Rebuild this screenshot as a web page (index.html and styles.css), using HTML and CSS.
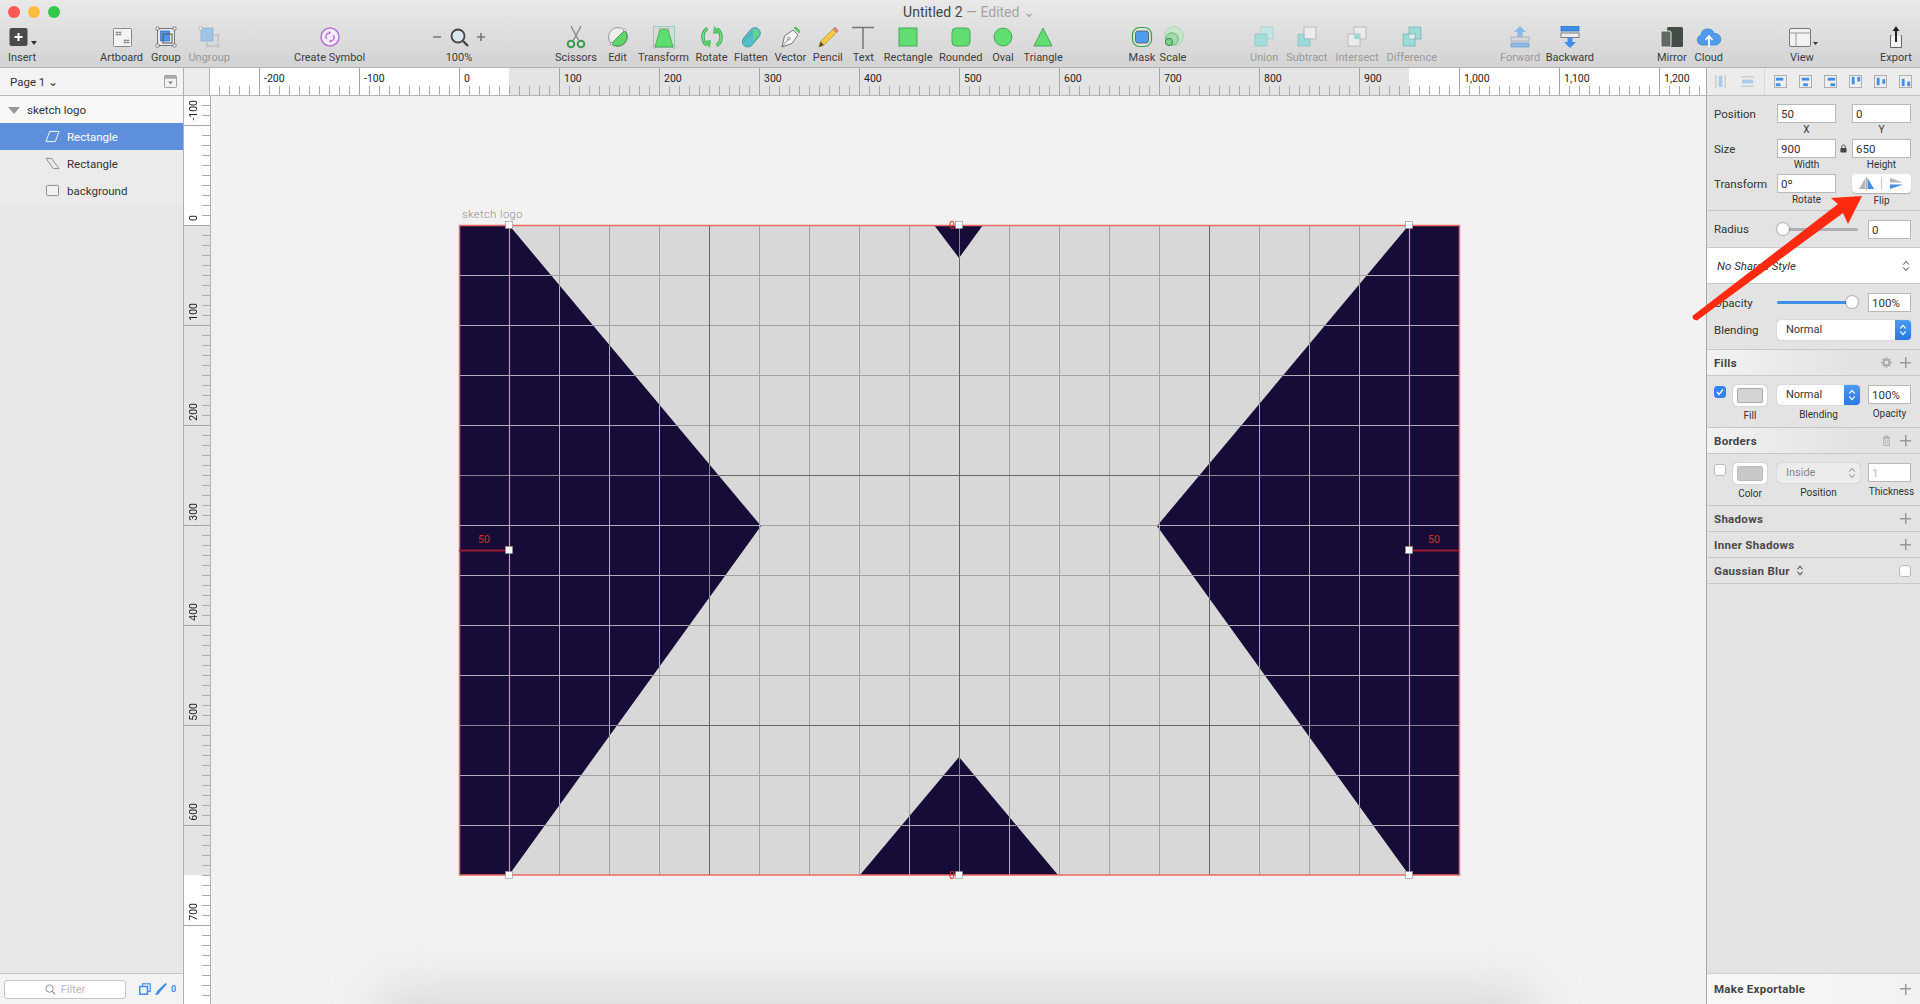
FILE: index.html
```html
<!DOCTYPE html>
<html lang="en">
<head>
    <meta charset="UTF-8">
    <title>Untitled 2 - Edited</title>
    <link rel="stylesheet" href="styles.css">
</head>
<body>
<div class="app">
    <header class="toolbar">
        <div class="titlebar">
            <div class="lights"><i class="light red"></i><i class="light yellow"></i><i class="light green"></i></div>
            <div class="doc-title">Untitled 2 <em>— Edited ⌄</em></div>
        </div>
        <div class="tools">
            <div class="group g-insert">
                <div class="tool"><svg viewBox="0 0 28 28"><rect x="1.500" y="5" width="18" height="18" rx="2" fill="#4a4a4a"/><path d="M10.500 10v8M6.500 14h8" stroke="#fff" stroke-width="2"/><path d="M23 18h6l-3 4z" fill="#333"/></svg><span>Insert</span></div>
            </div>
            <div class="group g-art">
                <div class="tool"><svg viewBox="0 0 28 28"><rect x="5.500" y="5.500" width="18" height="18" rx="1" fill="#f4f4f4" stroke="#888"/><path d="M9 8v5M12 8v5M7.500 9.500h6M7.500 11.500h6M17 16v5M20 16v5M15.500 17.500h6M15.500 19.500h6" stroke="#777" stroke-width=".7" fill="none"/></svg><span>Artboard</span></div>
                <div class="tool"><svg viewBox="0 0 28 28"><rect x="5.500" y="5.500" width="17" height="17" fill="#e8e8e8" stroke="#777"/><rect x="8.500" y="8" width="9" height="10" fill="#4f96ea" stroke="#2f6fc0" stroke-width=".7"/><rect x="11" y="11" width="9" height="9" fill="none" stroke="#555"/><path d="M4 4h3v3H4zM21 4h3v3h-3zM4 21h3v3H4zM21 21h3v3h-3z" fill="#fff" stroke="#666" stroke-width=".7"/></svg><span>Group</span></div>
                <div class="tool off"><svg viewBox="0 0 28 28"><rect x="6" y="5" width="12" height="13" fill="#9cc6ea" stroke="#86aac8" stroke-width=".7"/><rect x="12" y="12" width="11" height="11" fill="none" stroke="#b8b8b8"/><path d="M4 4h3v3H4zM22 11h2v2h-2zM11 22h2v2h-2zM22 22h2v2h-2z" fill="#fff" stroke="#aaa" stroke-width=".7"/></svg><span>Ungroup</span></div>
            </div>
            <div class="group g-symbol">
                <div class="tool"><svg viewBox="0 0 28 28"><circle cx="14" cy="14" r="9" fill="#f4edf8" stroke="#b774d8" stroke-width="1.500"/><path d="M10.500 16a4 4 0 0 1 3-6.200M17.500 12a4 4 0 0 1-3 6.200" fill="none" stroke="#b95fe0" stroke-width="1.300"/><path d="M13 8l2 1.800-2 1.700zM15 20l-2-1.800 2-1.700z" fill="#b95fe0"/></svg><span>Create Symbol</span></div>
            </div>
            <div class="group g-zoom">
                <div class="tool zoomer"><svg class="wide" viewBox="0 0 56 28"><path d="M2 14h8M46 14h8M50 10v8" stroke="#777" stroke-width="1.600" fill="none"/><circle cx="27" cy="13" r="6.500" fill="#d8e6ee" stroke="#444" stroke-width="1.800"/><path d="M32 18l5 5" stroke="#444" stroke-width="2.400"/></svg><span>100%</span></div>
            </div>
            <div class="group g-draw">
                <div class="tool"><svg viewBox="0 0 28 28"><path d="M9 3l8 15M19 3l-8 15" stroke="#8a8a8a" stroke-width="1.400" fill="none"/><circle cx="9" cy="21" r="3.300" fill="none" stroke="#3f9a52" stroke-width="2"/><circle cx="19" cy="21" r="3.300" fill="none" stroke="#3f9a52" stroke-width="2"/></svg><span>Scissors</span></div>
                <div class="tool"><svg viewBox="0 0 28 28"><circle cx="14" cy="14" r="9.500" fill="#eee" stroke="#999"/><path d="M7.300 20.700A9.500 9.500 0 0 0 20.700 7.300z" fill="#5fd868" stroke="#3f9a52"/><circle cx="7.300" cy="20.700" r="1.300" fill="#fff" stroke="#666" stroke-width=".5"/><circle cx="20.700" cy="7.300" r="1.300" fill="#fff" stroke="#666" stroke-width=".5"/></svg><span>Edit</span></div>
                <div class="tool"><svg viewBox="0 0 28 28"><rect x="3.500" y="3.500" width="21" height="21" fill="#c8e0d0" fill-opacity=".5" stroke="#9cb"/><path d="M10 6h8l5 18H5z" fill="#5fdc70" stroke="#3f9a52" stroke-width=".7"/><path d="M9 5h2v2H9zM17 5h2v2h-2zM3 23h2v2H3zM23 23h2v2h-2z" fill="#fff" stroke="#777" stroke-width=".5"/></svg><span>Transform</span></div>
                <div class="tool"><svg viewBox="0 0 28 28"><path d="M9.500 5.500C3 9 4 19 9 22" fill="none" stroke="#3f9a52" stroke-width="3.400"/><path d="M9.500 5.500C3 9 4 19 9 22" fill="none" stroke="#6fe07c" stroke-width="1.800"/><path d="M5 18l7 7 1-8z" fill="#55c566"/><path d="M18.500 22.500C25 19 24 9 19 6" fill="none" stroke="#3f9a52" stroke-width="3.400"/><path d="M18.500 22.500C25 19 24 9 19 6" fill="none" stroke="#6fe07c" stroke-width="1.800"/><path d="M23 10l-7-7-1 8z" fill="#55c566"/></svg><span>Rotate</span></div>
                <div class="tool"><svg viewBox="0 0 28 28"><rect x="9" y="3" width="11" height="22" rx="5.500" transform="rotate(40 14 14)" fill="#54bdca" stroke="#3a8f9a" stroke-width=".7"/><path d="M16 7c3-2 7 1 5.500 5L16 18z" fill="#62d884"/><path d="M7 18l9-10" stroke="#3a8f9a" stroke-width=".6"/></svg><span>Flatten</span></div>
                <div class="tool"><svg viewBox="0 0 28 28"><path d="M6 24l2.500-11L17 7l5 5-6 8.500z" fill="#f4f4f4" stroke="#777"/><path d="M6 24l6-7.500" stroke="#777" stroke-width=".8"/><circle cx="12.800" cy="15.600" r="1.400" fill="none" stroke="#777" stroke-width=".8"/><path d="M18 5l2-1 4 4-1 2z" fill="#5fd868" stroke="#3f9a52" stroke-width=".6"/></svg><span>Vector</span></div>
                <div class="tool"><svg viewBox="0 0 28 28"><path d="M5 24l1.500-5.500L19 6l3.500 3.500L10 22z" fill="#f4c84a" stroke="#b78f2a" stroke-width=".7"/><path d="M5 24l1.500-5.500L10 22z" fill="#5a5040"/><path d="M19 6l2-2 3.500 3.500-2 2z" fill="#e88a90" stroke="#a06060" stroke-width=".5"/></svg><span>Pencil</span></div>
                <div class="tool"><svg viewBox="0 0 28 28"><path d="M3 4.500h22M14 4.500V26" stroke="#777" stroke-width="1.500" fill="none"/></svg><span>Text</span></div>
                <div class="tool"><svg viewBox="0 0 28 28"><rect x="5" y="5" width="18" height="18" class="shape"/></svg><span>Rectangle</span></div>
                <div class="tool"><svg viewBox="0 0 28 28"><rect x="5" y="5" width="18" height="18" rx="4" class="shape"/></svg><span>Rounded</span></div>
                <div class="tool"><svg viewBox="0 0 28 28"><circle cx="14" cy="14" r="9" class="shape"/></svg><span>Oval</span></div>
                <div class="tool"><svg viewBox="0 0 28 28"><path d="M14 5l9 18H5z" class="shape"/></svg><span>Triangle</span></div>
            </div>
            <div class="group g-mask">
                <div class="tool"><svg viewBox="0 0 28 28"><rect x="4.500" y="4.500" width="19" height="19" rx="7" fill="#d8e8d8" stroke="#3f9a52" stroke-width="1.200"/><rect x="7.500" y="8" width="13" height="12" rx="2.500" fill="#4f9cec" stroke="#555" stroke-width=".8"/></svg><span>Mask</span></div>
                <div class="tool"><svg viewBox="0 0 28 28"><circle cx="15" cy="13" r="9.500" fill="#c6e6ca" stroke="#9fd0a6" stroke-width=".7"/><circle cx="13" cy="16" r="6.200" fill="#a2dcaa" stroke="#4ea860" stroke-width=".8"/><circle cx="10" cy="19" r="3.600" fill="#7cd28a" stroke="#36864a"/></svg><span>Scale</span></div>
            </div>
            <div class="group g-bool off">
                <div class="tool"><svg viewBox="0 0 28 28"><rect x="11" y="4" width="12" height="12" fill="#c4e6e4" stroke="#a8c8c8" stroke-width=".7"/><rect x="5" y="11" width="12" height="12" fill="#a4dedb" stroke="#8cc0be" stroke-width=".7"/></svg><span>Union</span></div>
                <div class="tool"><svg viewBox="0 0 28 28"><rect x="11" y="4" width="12" height="12" fill="#ececec" stroke="#aaa" stroke-width=".7"/><path d="M5 11h6v5h6v7H5z" fill="#9cdcd8" stroke="#80bcb8" stroke-width=".7"/></svg><span>Subtract</span></div>
                <div class="tool"><svg viewBox="0 0 28 28"><rect x="11" y="4" width="12" height="12" fill="#ececec" stroke="#aaa" stroke-width=".7"/><rect x="5" y="11" width="12" height="12" fill="#ececec" stroke="#aaa" stroke-width=".7"/><rect x="11" y="11" width="6" height="5" fill="#9cdcd8"/></svg><span>Intersect</span></div>
                <div class="tool"><svg viewBox="0 0 28 28"><rect x="11" y="4" width="12" height="12" fill="#9cdcd8" stroke="#70b0ac" stroke-width=".7"/><rect x="5" y="11" width="12" height="12" fill="#9cdcd8" stroke="#70b0ac" stroke-width=".7"/><rect x="11" y="11" width="6" height="5" fill="#e8e8e8" stroke="#70b0ac" stroke-width=".5"/></svg><span>Difference</span></div>
            </div>
            <div class="group g-order">
                <div class="tool off"><svg viewBox="0 0 28 28"><path d="M14 3l6 6h-3.500v5h-5V9H8z" fill="#8ab8ea"/><rect x="5" y="14" width="18" height="4" fill="#d8d8d8" stroke="#9ab" stroke-width=".8"/><rect x="5" y="20" width="18" height="4" fill="#8ab8ea" stroke="#7aa0c8" stroke-width=".8"/></svg><span>Forward</span></div>
                <div class="tool"><svg viewBox="0 0 28 28"><rect x="5" y="3.500" width="18" height="4.500" fill="#3f8ee8" stroke="#2a6fb8" stroke-width=".8"/><rect x="5" y="10" width="18" height="4.500" fill="#eee" stroke="#666" stroke-width=".8"/><path d="M11.500 14.500h5V19H20l-6 6-6-6h3.500z" fill="#3f8ee8"/></svg><span>Backward</span></div>
            </div>
            <div class="group g-send">
                <div class="tool"><svg viewBox="0 0 28 28"><rect x="9" y="4" width="16" height="20" rx="1.500" fill="#444c46"/><rect x="3" y="8" width="10" height="16" rx="1.500" fill="#5f6862" stroke="#e4e4e4"/></svg><span>Mirror</span></div>
                <div class="tool"><svg viewBox="0 0 28 28"><path d="M7 21a5 5 0 0 1-1-9.800A6 6 0 0 1 13 5a6 6 0 0 1 6 4.500 5.800 5.800 0 0 1 2 11.500z" fill="#4f9cec" stroke="#2f7cd0" stroke-width=".7" transform="translate(0 1)"/><path d="M14 24v-10M10.500 17l3.500-4 3.500 4" fill="none" stroke="#fff" stroke-width="1.800"/></svg><span>Cloud</span></div>
            </div>
            <div class="group g-view">
                <div class="tool"><svg viewBox="0 0 28 28"><rect x="1.500" y="5.500" width="21" height="18" rx="1.500" fill="#f2f2f2" stroke="#777"/><path d="M1.500 10h21M8 10v13.500" stroke="#999" fill="none"/><path d="M25 19h5l-2.500 3z" fill="#333"/></svg><span>View</span></div>
            </div>
            <div class="group g-export">
                <div class="tool"><svg viewBox="0 0 28 28"><path d="M9.500 12.500h-1v12h11v-12h-1" fill="#f2f2f2" stroke="#666"/><path d="M14 19V6" stroke="#222" stroke-width="2"/><path d="M10.500 8L14 3l3.500 5z" fill="#222"/></svg><span>Export</span></div>
            </div>
        </div>
    </header>

    <div class="work">
        <aside class="sidebar">
            <div class="page-row">
                <span>Page 1 ⌄</span>
                <svg class="page-ico" viewBox="0 0 14 14"><rect x=".5" y=".5" width="13" height="13" rx="1" fill="#f2f2f2" stroke="#999"/><path d="M1 1h12v3H1z" fill="#aaa"/><path d="M4.500 7h5L7 10z" fill="#777"/></svg>
            </div>
            <div class="layer layer-group">
                <svg class="caret" viewBox="0 0 12 8"><path d="M0 1h12L6 8z" fill="#999"/></svg>
                <span>sketch logo</span>
            </div>
            <div class="layer layer-child selected">
                <svg viewBox="0 0 16 14"><path d="M5 1.500h10l-4 11H1z" fill="none" stroke="#fff"/></svg>
                <span>Rectangle</span>
            </div>
            <div class="layer layer-child">
                <svg viewBox="0 0 16 14"><path d="M1 1.500h6l8 11H9z" fill="none" stroke="#888"/></svg>
                <span>Rectangle</span>
            </div>
            <div class="layer layer-child">
                <svg viewBox="0 0 16 14"><rect x="1.500" y="1.500" width="13" height="11" rx="1" fill="#f0f0f0" stroke="#888"/></svg>
                <span>background</span>
            </div>
            <div class="side-fill"></div>
            <div class="filter-bar">
                <div class="filter">
                    <svg viewBox="0 0 12 12"><circle cx="5" cy="5" r="4" fill="none" stroke="#888"/><path d="M8 8l3 3" stroke="#888" stroke-width="1.200"/></svg>
                    <span>Filter</span>
                </div>
                <svg class="filter-ico" viewBox="0 0 12 12"><rect x="3.500" y=".8" width="7.700" height="7.700" fill="none" stroke="#3f8ee8" stroke-width="1.200"/><rect x=".8" y="3.500" width="7.700" height="7.700" fill="#f3f3f3" stroke="#3f8ee8" stroke-width="1.500"/></svg>
                <svg class="filter-ico" viewBox="0 0 12 12"><path d="M0 12c3 0 4-1 5-3L12 1 10.500 0 3 7c-1.500 1.500-1.500 3-3 5z" fill="#3f8ee8"/></svg>
                <b class="filter-count">0</b>
            </div>
        </aside>

        <main class="stage">
            <div class="ruler-row">
                <div class="ruler-corner"></div>
                <div class="h-ruler">
                    <div class="h-first"></div>
                    <div class="h-cell">-200</div>
                    <div class="h-cell">-100</div>
                    <div class="h-cell">0</div>
                    <div class="h-cell">100</div>
                    <div class="h-cell">200</div>
                    <div class="h-cell">300</div>
                    <div class="h-cell">400</div>
                    <div class="h-cell">500</div>
                    <div class="h-cell">600</div>
                    <div class="h-cell">700</div>
                    <div class="h-cell">800</div>
                    <div class="h-cell">900</div>
                    <div class="h-cell">1,000</div>
                    <div class="h-cell">1,100</div>
                    <div class="h-cell">1,200</div>
                </div>
            </div>
            <div class="canvas-row">
                <div class="v-ruler">
                    <div class="v-cell v-first"><span>-100</span></div>
                    <div class="v-cell"><span>0</span></div>
                    <div class="v-cell"><span>100</span></div>
                    <div class="v-cell"><span>200</span></div>
                    <div class="v-cell"><span>300</span></div>
                    <div class="v-cell"><span>400</span></div>
                    <div class="v-cell"><span>500</span></div>
                    <div class="v-cell"><span>600</span></div>
                    <div class="v-cell"><span>700</span></div>
                </div>
                <div class="canvas">
                    <div class="board-name">sketch logo</div>
                    <svg class="board" width="1002" height="652" viewBox="0 0 1002 652">
                        <defs>
                            <pattern id="gridOnGrey" width="50" height="50" patternUnits="userSpaceOnUse"><path d="M0 .5H50M.5 0V50" stroke="#a2a2a2" fill="none"/></pattern>
                            <pattern id="gridOnDark" width="50" height="50" patternUnits="userSpaceOnUse"><path d="M0 .5H50M.5 0V50" stroke="#b4acbb" fill="none"/></pattern>
                            <pattern id="boldOnGrey" width="250" height="250" patternUnits="userSpaceOnUse"><path d="M0 .5H250M.5 0V250" stroke="#666" fill="none"/></pattern>
                            <pattern id="boldOnDark" width="250" height="250" patternUnits="userSpaceOnUse"><path d="M0 .5H250M.5 0V250" stroke="#8b8494" fill="none"/></pattern>
                            <path id="logoShapes" d="M0 0H50L302 301 50 650H0ZM1000 0H950L698 301 950 650H1000ZM475 0H524L500 33ZM500 532L401 650H599Z"/>
                        </defs>
                        <rect width="1000" height="650" fill="#d8d8d8"/>
                        <rect width="1000" height="650" fill="url(#gridOnGrey)"/>
                        <rect width="1000" height="650" fill="url(#boldOnGrey)"/>
                        <use href="#logoShapes" fill="#170b38"/>
                        <use href="#logoShapes" fill="url(#gridOnDark)"/>
                        <use href="#logoShapes" fill="url(#boldOnDark)"/>
                        <rect x=".5" y=".5" width="1000" height="649.500" fill="none" stroke="#ee6a62" stroke-width="1.500"/>
                        <path d="M50.500 0V650M950.500 0V650" stroke="#e58f8a" stroke-width="1.200" fill="none"/>
                        <path d="M0 325.500H50M950 325.500H1000" stroke="#9a1c30" stroke-width="2" fill="none"/>
                        <text x="25" y="318" class="measure" text-anchor="middle">50</text>
                        <text x="975" y="318" class="measure" text-anchor="middle">50</text>
                        <text x="493" y="4" class="measure" text-anchor="middle">0</text>
                        <text x="493" y="654" class="measure" text-anchor="middle">0</text>
                        <g class="handles">
                            <rect x="46.500" y="-3.500" width="7" height="7"/><rect x="496.500" y="-3.500" width="7" height="7"/><rect x="946.500" y="-3.500" width="7" height="7"/>
                            <rect x="46.500" y="321.500" width="7" height="7"/><rect x="946.500" y="321.500" width="7" height="7"/>
                            <rect x="46.500" y="646.500" width="7" height="7"/><rect x="496.500" y="646.500" width="7" height="7"/><rect x="946.500" y="646.500" width="7" height="7"/>
                        </g>
                    </svg>
                    <div class="canvas-shade"></div>
                </div>
            </div>
        </main>

        <aside class="inspector">
            <div class="align-bar">
                <div class="align-a">
                    <svg viewBox="0 0 14 14"><path d="M1 0v14M11 0v14" stroke="#bbb" fill="none"/><rect x="4" y="1" width="4" height="12" fill="#a8ccee"/></svg>
                    <svg viewBox="0 0 14 14"><path d="M0 2h14M0 12h14" stroke="#bbb" fill="none"/><rect x="1" y="5" width="12" height="4" fill="#a8ccee"/></svg>
                </div>
                <div class="align-b">
                    <svg viewBox="0 0 14 14"><rect x=".5" y=".5" width="13" height="13" fill="#eee" stroke="#aaa"/><rect x="2" y="3" width="8" height="3" fill="#3f8ee8"/><rect x="2" y="9" width="5" height="3" fill="#3f8ee8"/></svg>
                    <svg viewBox="0 0 14 14"><rect x=".5" y=".5" width="13" height="13" fill="#eee" stroke="#aaa"/><rect x="3" y="3" width="8" height="3" fill="#3f8ee8"/><rect x="4.500" y="9" width="5" height="3" fill="#3f8ee8"/></svg>
                    <svg viewBox="0 0 14 14"><rect x=".5" y=".5" width="13" height="13" fill="#eee" stroke="#aaa"/><rect x="4" y="3" width="8" height="3" fill="#3f8ee8"/><rect x="7" y="9" width="5" height="3" fill="#3f8ee8"/></svg>
                    <svg viewBox="0 0 14 14"><rect x=".5" y=".5" width="13" height="13" fill="#eee" stroke="#aaa"/><rect x="3" y="2" width="3" height="8" fill="#3f8ee8"/><rect x="9" y="2" width="3" height="5" fill="#3f8ee8"/></svg>
                    <svg viewBox="0 0 14 14"><rect x=".5" y=".5" width="13" height="13" fill="#eee" stroke="#aaa"/><rect x="3" y="3" width="3" height="8" fill="#3f8ee8"/><rect x="9" y="4.500" width="3" height="5" fill="#3f8ee8"/></svg>
                    <svg viewBox="0 0 14 14"><rect x=".5" y=".5" width="13" height="13" fill="#eee" stroke="#aaa"/><rect x="3" y="4" width="3" height="8" fill="#3f8ee8"/><rect x="9" y="7" width="3" height="5" fill="#3f8ee8"/></svg>
                </div>
            </div>

            <section class="sec sec-xform">
                <div class="row">
                    <label>Position</label>
                    <div class="field"><div class="input">50</div><small>X</small></div>
                    <div class="field"><div class="input">0</div><small>Y</small></div>
                </div>
                <div class="row">
                    <label>Size</label>
                    <div class="field"><div class="input">900</div><small>Width</small></div>
                    <svg class="lock" viewBox="0 0 8 10"><path d="M2 4.500V3a2 2 0 0 1 4 0v1.500" fill="none" stroke="#444"/><rect x=".5" y="4.500" width="7" height="5" rx=".8" fill="#444"/></svg>
                    <div class="field"><div class="input">650</div><small>Height</small></div>
                </div>
                <div class="row">
                    <label>Transform</label>
                    <div class="field"><div class="input">0º</div><small>Rotate</small></div>
                    <div class="field">
                        <div class="flip">
                            <svg viewBox="0 0 16 12"><path d="M7 1v10H1z" fill="#b4b4b4"/><path d="M9 1v10h6z" fill="#3f8ee8"/><path d="M8 0v12" stroke="#777" stroke-width=".6"/></svg>
                            <svg viewBox="0 0 16 12"><path d="M2 1l12 4H2z" fill="#b4b4b4"/><path d="M2 7h12L2 11z" fill="#3f8ee8"/></svg>
                        </div>
                        <small class="flip-cap">Flip</small>
                    </div>
                </div>
            </section>

            <section class="sec sec-radius">
                <label>Radius</label>
                <div class="slider"><i class="knob knob-start"></i></div>
                <div class="input small-input">0</div>
            </section>

            <div class="style-row"><em>No Shared Style</em><svg viewBox="0 0 8 13"><path d="M1 5l3-3.500L7 5M1 8l3 3.500L7 8" fill="none" stroke="#333" stroke-width="1"/></svg></div>

            <section class="sec sec-opacity">
                <div class="op-row">
                    <label>Opacity</label>
                    <div class="slider slider-on"><i class="knob knob-end"></i></div>
                    <div class="input small-input">100%</div>
                </div>
                <div class="op-row">
                    <label>Blending</label>
                    <div class="select select-full">Normal<b class="stepper"><svg viewBox="0 0 8 13"><path d="M1 5l3-3.500L7 5M1 8l3 3.500L7 8" fill="none" stroke="#fff" stroke-width="1.200"/></svg></b></div>
                </div>
            </section>

            <div class="sec-head">Fills<span class="head-icons"><svg viewBox="0 0 12 12"><circle cx="6" cy="6" r="3.200" fill="none" stroke="#aaa" stroke-width="2.200"/><path d="M6 0v2M6 10v2M0 6h2M10 6h2M1.800 1.800l1.400 1.400M8.800 8.800l1.400 1.400M1.800 10.200l1.400-1.400M8.800 3.200l1.400-1.400" stroke="#aaa" stroke-width="1.500"/></svg><i class="plus"></i></span></div>
            <section class="sec style-line">
                <b class="check on"><svg viewBox="0 0 10 10"><path d="M2 5l2 2.500L8 2.500" fill="none" stroke="#fff" stroke-width="1.400"/></svg></b>
                <div class="colum colum-swatch"><div class="swatch"><i></i></div><small>Fill</small></div>
                <div class="colum colum-select"><div class="select">Normal<b class="stepper"><svg viewBox="0 0 8 13"><path d="M1 5l3-3.500L7 5M1 8l3 3.500L7 8" fill="none" stroke="#fff" stroke-width="1.200"/></svg></b></div><small>Blending</small></div>
                <div class="colum colum-num"><div class="input">100%</div><small>Opacity</small></div>
            </section>

            <div class="sec-head">Borders<span class="head-icons"><svg viewBox="0 0 10 12"><path d="M1 2.500h8M3.500 2.500V1h3v1.500M2 3.500h6v8H2z" fill="none" stroke="#aaa"/><path d="M4 5v5M6 5v5" stroke="#aaa" stroke-width=".7"/></svg><i class="plus"></i></span></div>
            <section class="sec style-line">
                <b class="check"></b>
                <div class="colum colum-swatch"><div class="swatch swatch-off"><i></i></div><small>Color</small></div>
                <div class="colum colum-select"><div class="select select-off">Inside<svg class="chev" viewBox="0 0 8 13"><path d="M1 5l3-3.500L7 5M1 8l3 3.500L7 8" fill="none" stroke="#777" stroke-width="1"/></svg></div><small>Position</small></div>
                <div class="colum colum-num"><div class="input input-off">1</div><small class="wide-cap">Thickness</small></div>
            </section>

            <div class="sec-flat">Shadows<i class="plus"></i></div>
            <div class="sec-flat">Inner Shadows<i class="plus"></i></div>
            <div class="sec-flat">Gaussian Blur <svg class="blur-chev" viewBox="0 0 8 13"><path d="M1 5l3-3.500L7 5M1 8l3 3.500L7 8" fill="none" stroke="#444" stroke-width="1.200"/></svg><b class="check blur-check"></b></div>
            <div class="insp-fill"></div>
            <div class="export-row">Make Exportable<i class="plus"></i></div>
        </aside>
    </div>

    <svg class="annotation" viewBox="0 0 1920 1004"><path d="M1693 315.500 1838 204 1831 198 1862 196 1848 224 1843 213 1697 320.500Q1691 319 1693 315.500Z" fill="#ff2a10"/></svg>
</div>
</body>
</html>
```

FILE: styles.css
```css
* {
    box-sizing: border-box;
}
html, body {
    margin: 0;
    height: 100%;
    overflow: hidden;
}
body {
    font-family: Roboto, "Liberation Sans", sans-serif;
    font-size: 11px;
    color: #333;
}
.app {
    position: relative;
    width: 1920px;
    height: 1004px;
    display: flex;
    flex-direction: column;
    overflow: hidden;
}

/* toolbar */
.toolbar {
    height: 68px;
    flex: none;
    background: linear-gradient(#e9e9e9, #d3d3d3);
    border-bottom: 1px solid #b2b2b2;
}
.titlebar {
    height: 23px;
    margin-bottom: -1px;
    display: flex;
    align-items: center;
}
.lights {
    width: 0;
    display: flex;
    gap: 8px;
    padding-left: 8px;
}
.light {
    flex: none;
    width: 12px;
    height: 12px;
    border-radius: 50%;
}
.light.red { background: #fc5753; }
.light.yellow { background: #fdbc40; }
.light.green { background: #34c84a; }
.doc-title {
    flex: 1;
    text-align: center;
    padding-left: 10px;
    font-size: 14px;
    color: #444;
}
.doc-title em {
    font-style: normal;
    color: #a4a4a4;
}
.tools {
    display: flex;
    height: 45px;
}
.group {
    display: flex;
    justify-content: space-between;
    flex: none;
    height: 100%;
}
.g-insert { width: 28px; margin-left: 8px; }
.g-art { width: 130px; margin-left: 64px; }
.g-symbol { width: 70px; margin-left: 64px; }
.g-zoom { width: 56px; margin-left: 67px; }
.g-draw { width: 508px; margin-left: 68px; }
.g-mask { width: 59px; margin-left: 65px; }
.g-bool { width: 187px; margin-left: 63px; }
.g-order { width: 94px; margin-left: 63px; }
.g-send { width: 66px; margin-left: 63px; }
.g-view { width: 28px; margin-left: 65px; }
.g-export { width: 32px; margin-left: 64px; }
.tool {
    display: flex;
    flex-direction: column;
    align-items: center;
    width: min-content;
    white-space: nowrap;
    color: #3c3c3c;
}
.tool svg {
    width: 28px;
    height: 28px;
    overflow: visible;
    margin-top: 1px;
}
.tool svg.wide { width: 56px; }
.tool span {
    line-height: 14px;
}
.tool.off, .off .tool {
    color: #999;
}
.zoomer { width: 56px; }
.shape {
    fill: #62dd72;
    stroke: #44a95a;
}

/* main area */
.work {
    flex: 1;
    display: flex;
    min-height: 0;
}
.sidebar {
    width: 184px;
    flex: none;
    display: flex;
    flex-direction: column;
    background: #e8e8e8;
    border-right: 1px solid #b0b0b0;
}
.page-row {
    height: 28px;
    flex: none;
    display: flex;
    align-items: center;
    justify-content: space-between;
    padding: 0 6px 0 10px;
    background: #f3f3f3;
    border-bottom: 1px solid #b8b8b8;
    font-size: 11.5px;
}
.page-ico {
    width: 13px;
    height: 13px;
}
.layer {
    height: 27px;
    display: flex;
    align-items: center;
    flex: none;
    font-size: 11.5px;
}
.layer-group {
    padding-left: 8px;
    gap: 7px;
    background: #f8f8f8;
}
.caret {
    width: 12px;
    height: 8px;
}
.layer-child {
    padding-left: 45px;
    gap: 7px;
    background: #ebebeb;
}
.layer-child svg {
    width: 15px;
    height: 13px;
}
.layer-child.selected {
    background: #5e8fdc;
    color: #fff;
}
.side-fill {
    flex: 1;
}
.filter-bar {
    height: 31px;
    flex: none;
    display: flex;
    align-items: center;
    padding: 0 0 0 4px;
    background: #f3f3f3;
    border-top: 1px solid #c8c8c8;
}
.filter {
    width: 122px;
    height: 19px;
    display: flex;
    align-items: center;
    justify-content: center;
    gap: 5px;
    background: #fff;
    border: 1px solid #c4c4c4;
    border-radius: 3px;
    color: #b8b8b8;
    margin-right: 13px;
}
.filter svg {
    width: 11px;
    height: 11px;
}
.filter-ico {
    width: 12px;
    height: 12px;
    margin-right: 4px;
}
.filter-count {
    color: #3f8ee8;
    font-size: 9px;
}

.stage {
    flex: 1;
    min-width: 0;
    display: flex;
    flex-direction: column;
}
.ruler-row {
    height: 28px;
    flex: none;
    display: flex;
    border-bottom: 1px solid #b4b4b4;
}
.ruler-corner {
    width: 26px;
    flex: none;
    background: #ebebeb;
    border-right: 1px solid #b4b4b4;
}
.h-ruler {
    flex: 1;
    display: flex;
    overflow: hidden;
    background-image:
        linear-gradient(to right, #aaa 1px, transparent 1px),
        linear-gradient(to right, #fff 299px, #e4e4e4 299px, #e4e4e4 1199px, #fff 1199px);
    background-size: 10px 9px, 100% 100%;
    background-position: 9px bottom, 0 0;
    background-repeat: repeat-x, no-repeat;
}
.h-first {
    width: 49px;
    flex: none;
}
.h-cell {
    width: 100px;
    flex: none;
    padding: 4px 0 0 4px;
    border-left: 1px solid #a4a4a4;
    color: #222;
    font-size: 10.5px;
    line-height: 14px;
}
.canvas-row {
    flex: 1;
    display: flex;
    min-height: 0;
}
.v-ruler {
    width: 27px;
    flex: none;
    overflow: hidden;
    border-right: 1px solid #b4b4b4;
    background-image:
        linear-gradient(to bottom, #aaa 1px, transparent 1px),
        linear-gradient(to bottom, #fff 129px, #e4e4e4 129px, #e4e4e4 779px, #fff 779px);
    background-size: 8px 10px, 100% 100%;
    background-position: right 9px, 0 0;
    background-repeat: repeat-y, no-repeat;
}
.v-cell {
    height: 100px;
    display: flex;
    align-items: flex-end;
    padding: 0 0 4px 3px;
    border-bottom: 1px solid #a4a4a4;
    color: #222;
    font-size: 10.5px;
}
.v-cell span {
    writing-mode: vertical-rl;
    transform: rotate(180deg);
    line-height: 14px;
}
.v-first {
    height: 30px;
}
.canvas {
    flex: 1;
    position: relative;
    min-width: 0;
    overflow: hidden;
    background: #f2f2f2;
    padding: 112px 0 0 248px;
}
.board-name {
    margin: 0 0 3px 3px;
    color: #8a8a8a;
    line-height: 14px;
    letter-spacing: .5px;
    font-weight: 300;
}
.board {
    display: block;
    overflow: visible;
}
.measure {
    fill: #d03030;
    font-size: 10.5px;
    font-family: Roboto, sans-serif;
}
.handles rect {
    fill: #fff;
    stroke: #8c8c8c;
    stroke-width: .6;
}
.canvas-shade {
    position: absolute;
    left: 170px;
    bottom: -46px;
    width: 1150px;
    height: 60px;
    background: #d8d8d8;
    filter: blur(24px);
}

/* inspector */
.inspector {
    width: 214px;
    flex: none;
    display: flex;
    flex-direction: column;
    background: #e3e3e3;
    border-left: 1px solid #a8a8a8;
}
.inspector label {
    color: #333;
    font-size: 11.5px;
}
.align-bar {
    height: 28px;
    flex: none;
    display: flex;
    align-items: center;
    background: #ececec;
    border-bottom: 1px solid #c0c0c0;
}
.align-bar svg {
    width: 13px;
    height: 13px;
}
.align-a {
    width: 58px;
    height: 100%;
    display: flex;
    align-items: center;
    gap: 13px;
    padding-left: 8px;
    border-right: 1px solid #d8d8d8;
}
.align-b {
    display: flex;
    gap: 12px;
    padding-left: 9px;
}
.sec {
    flex: none;
    border-bottom: 1px solid #c8c8c8;
}
.sec-xform {
    height: 115px;
    padding: 8px 9px 0 7px;
}
.row {
    display: flex;
    height: 35px;
}
.row label {
    width: 63px;
    line-height: 20px;
}
.field {
    width: 59px;
    margin-right: 16px;
}
.field:last-child {
    margin-right: 0;
}
.field small, .colum small {
    display: block;
    text-align: center;
    font-size: 10px;
    line-height: 14px;
    color: #333;
}
.lock {
    width: 7px;
    height: 9px;
    margin: 5px 5px 0 -12px;
}
.input {
    height: 19px;
    padding: 1px 0 0 3px;
    background: #fff;
    border: 1px solid #b8b8b8;
    line-height: 16px;
    font-size: 11.5px;
    color: #333;
}
.flip {
    height: 19px;
    display: flex;
    background: #fff;
    border-radius: 4px;
    box-shadow: 0 1px 1px rgba(0, 0, 0, .25);
}
.flip svg {
    flex: 1;
    height: 13px;
    margin-top: 3px;
}
.flip svg:first-child {
    border-right: 1px solid #ccc;
}
.flip-cap {
    margin-top: 1px;
}
.sec-radius {
    height: 37px;
    display: flex;
    align-items: center;
    padding: 0 9px 0 7px;
}
.sec-radius label, .op-row label {
    width: 63px;
    flex: none;
}
.slider {
    position: relative;
    width: 81px;
    height: 3px;
    margin-right: 10px;
    flex: none;
    background: #b0b0b0;
    border-radius: 2px;
}
.slider-on {
    background: #3f8ee8;
}
.knob {
    position: absolute;
    top: -5px;
    width: 12px;
    height: 12px;
    border-radius: 50%;
    background: #fff;
    box-shadow: 0 0 1px 1px rgba(0, 0, 0, .22);
}
.knob-start { left: 0; }
.knob-end { right: 0; }
.small-input {
    width: 43px;
    flex: none;
}
.style-row {
    height: 36px;
    flex: none;
    display: flex;
    align-items: center;
    justify-content: space-between;
    padding: 0 10px;
    background: #fff;
    border-bottom: 1px solid #c8c8c8;
    font-size: 11.5px;
}
.style-row svg {
    width: 8px;
    height: 12px;
}
.sec-opacity {
    height: 66px;
    padding: 9px 9px 0 7px;
}
.op-row {
    display: flex;
    align-items: center;
    height: 19px;
    margin-bottom: 8px;
}
.select {
    position: relative;
    height: 20px;
    padding-left: 9px;
    background: #fff;
    border-radius: 4px;
    line-height: 20px;
    font-size: 11px;
    box-shadow: 0 0 1px rgba(0, 0, 0, .4);
}
.select-full {
    width: 134px;
}
.select-off {
    background: #ececec;
    color: #888;
}
.stepper {
    position: absolute;
    right: 0;
    top: 0;
    width: 16px;
    height: 20px;
    display: flex;
    align-items: center;
    justify-content: center;
    border-radius: 0 4px 4px 0;
    background: linear-gradient(#4d9af2, #2a78e0);
}
.stepper svg, .chev {
    width: 8px;
    height: 12px;
}
.chev {
    position: absolute;
    right: 4px;
    top: 4px;
}
.sec-head {
    height: 26px;
    flex: none;
    display: flex;
    align-items: center;
    justify-content: space-between;
    padding: 0 9px 0 7px;
    background: linear-gradient(to right, #f2f2f2, #e2e2e2 70%);
    border-bottom: 1px solid #c8c8c8;
    font-weight: 700;
    font-size: 11.5px;
    letter-spacing: .3px;
    color: #444;
}
.head-icons {
    display: flex;
    align-items: center;
    gap: 8px;
}
.head-icons svg {
    width: 11px;
    height: 11px;
}
.plus {
    position: relative;
    display: block;
    flex: none;
    width: 11px;
    height: 11px;
    background:
        linear-gradient(#999, #999) center / 11px 1.500px no-repeat,
        linear-gradient(#999, #999) center / 1.500px 11px no-repeat;
}
.style-line {
    height: 52px;
    display: flex;
    padding: 9px 9px 0 7px;
}
.check {
    flex: none;
    width: 12px;
    height: 12px;
    margin: 1px 7px 0 0;
    background: #fff;
    border: 1px solid #bbb;
    border-radius: 3px;
}
.check.on {
    background: #3584ee;
    border-color: #3584ee;
    display: flex;
}
.check svg {
    width: 10px;
    height: 10px;
}
.colum-swatch { width: 34px; margin-right: 10px; }
.colum-select { width: 83px; margin-right: 8px; }
.colum-num { width: 43px; }
.colum small {
    margin-top: 3px;
}
.wide-cap {
    white-space: nowrap;
    margin-right: -4px;
}
.swatch {
    height: 21px;
    padding: 3px 4px;
    background: #fff;
    border-radius: 4px;
    box-shadow: 0 0 1px rgba(0, 0, 0, .5);
}
.swatch i {
    display: block;
    height: 100%;
    background: #d4d4d4;
    border: 1px solid #a8a8a8;
    border-radius: 2px;
}
.swatch-off i {
    background: #c8c8c8;
    border-color: #bbb;
}
.input-off {
    color: #bbb;
}
.sec-flat {
    height: 26px;
    flex: none;
    display: flex;
    align-items: center;
    padding: 0 9px 0 7px;
    border-bottom: 1px solid #c8c8c8;
    font-weight: 700;
    font-size: 11.5px;
    letter-spacing: .3px;
    color: #4a4a4a;
}
.sec-flat .plus, .blur-check {
    margin: 0 0 0 auto;
}
.blur-chev {
    width: 8px;
    height: 11px;
    margin-left: 6px;
}
.insp-fill {
    flex: 1;
}
.export-row {
    height: 31px;
    flex: none;
    display: flex;
    align-items: center;
    justify-content: space-between;
    padding: 0 9px 0 7px;
    background: linear-gradient(to right, #f8f8f8, #f2f2f2);
    border-top: 1px solid #d0d0d0;
    font-weight: 700;
    font-size: 11.5px;
    letter-spacing: .3px;
    color: #444;
}

/* red arrow drawn over the shot */
.annotation {
    position: absolute;
    left: 0;
    top: 0;
    width: 1920px;
    height: 1004px;
    pointer-events: none;
}
```
